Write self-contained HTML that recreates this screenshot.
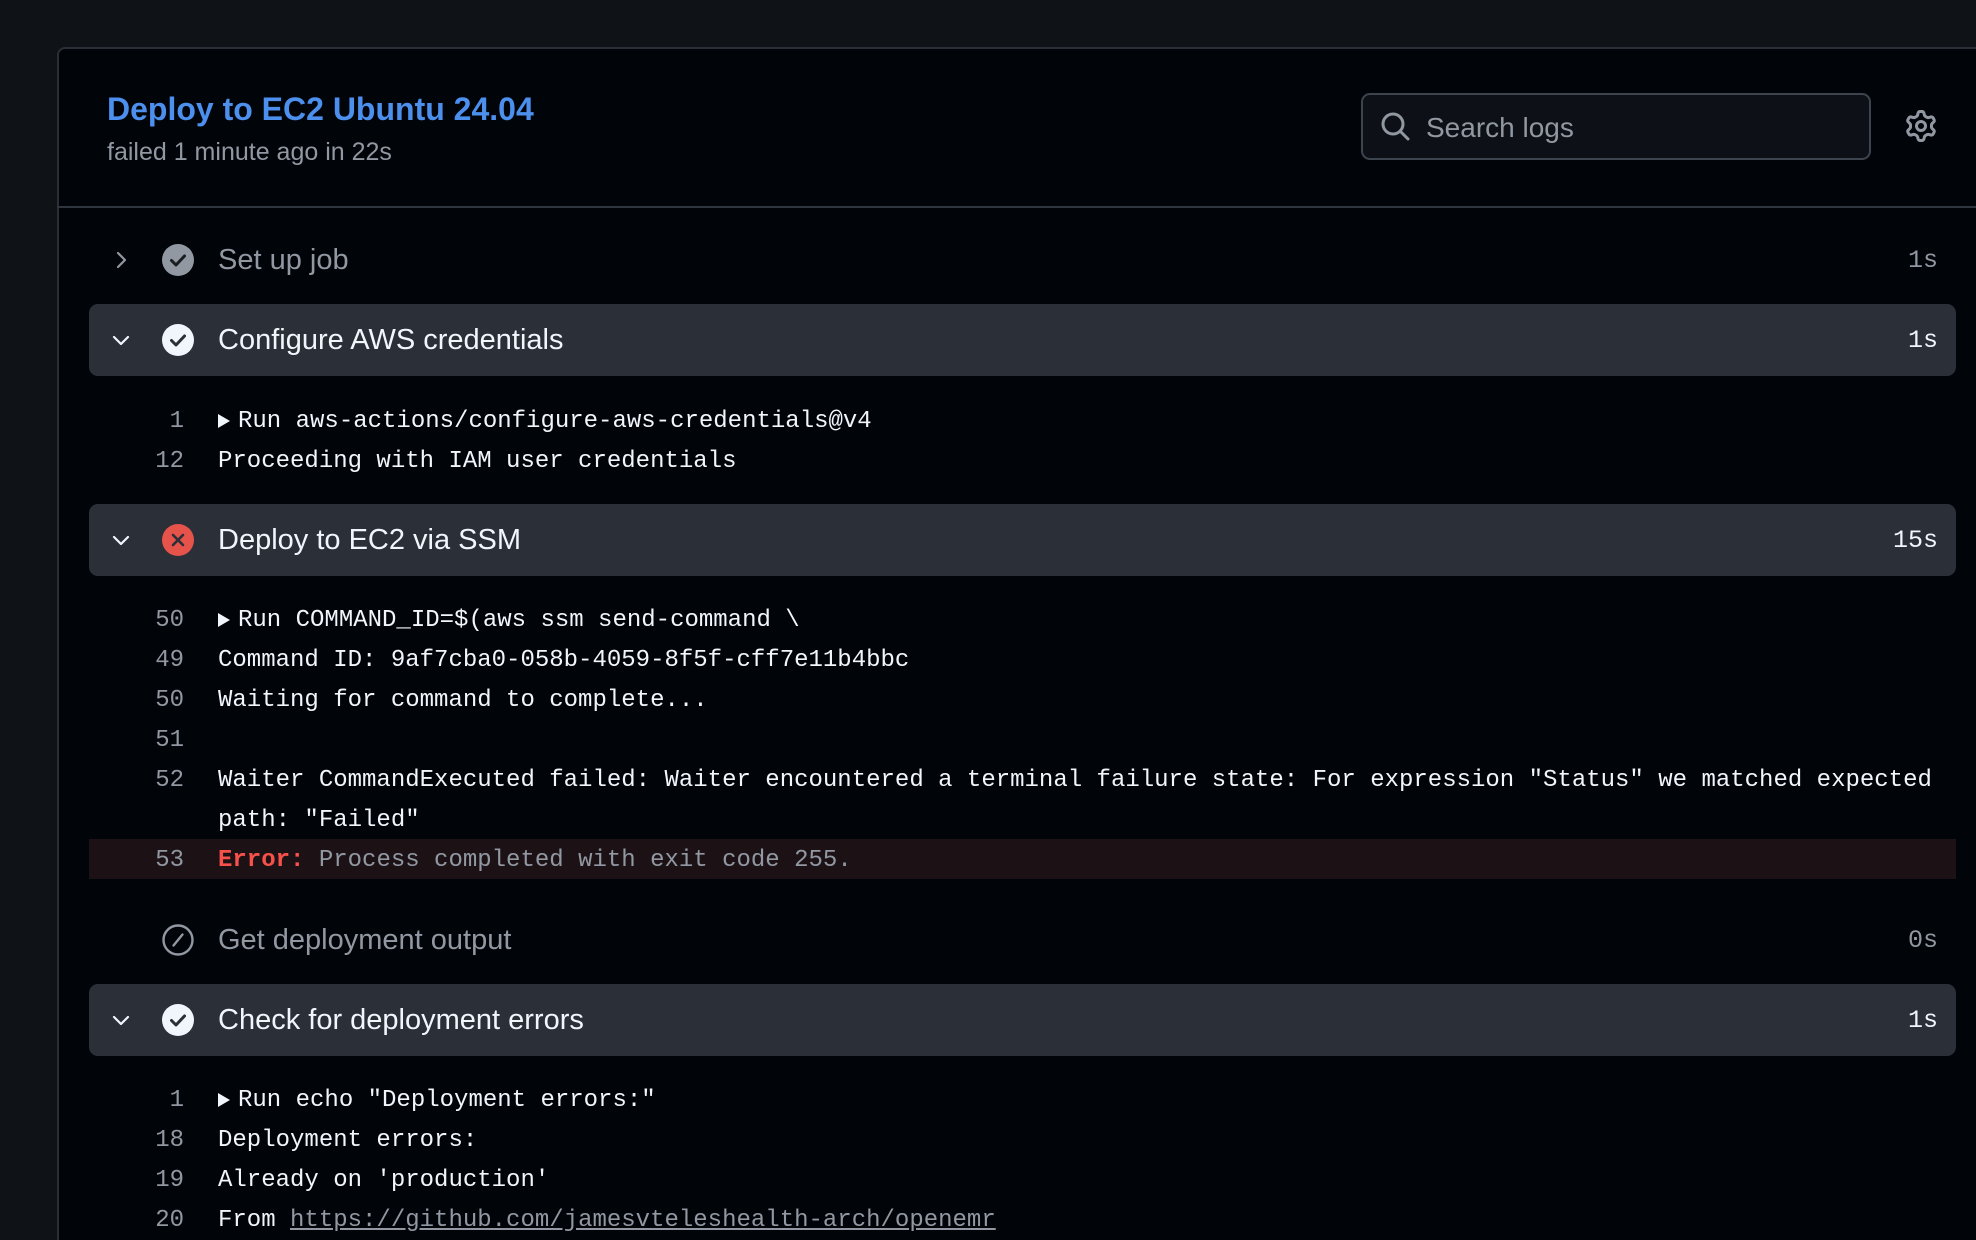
<!DOCTYPE html>
<html style="height:1240px;overflow:hidden"><head><meta charset="utf-8"><style>
*{margin:0;padding:0;box-sizing:border-box}
body{width:1976px;height:1240px;background:#0f1217;overflow:hidden;position:relative;font-family:"Liberation Sans",sans-serif}
.panel{position:absolute;left:57px;top:47px;width:1940px;height:1240px;background:#010409;border:2px solid #2a2f37;border-radius:8px}
.abs{position:absolute}
.title{left:107px;top:91px;font-size:32px;font-weight:bold;color:#4c8fed}
.sub{left:107px;top:138px;font-size:25px;color:#9198a1}
.div{left:57px;top:206px;width:1919px;height:2px;background:#2f353d}
.search{left:1361px;top:93px;width:510px;height:67px;border:2px solid #3d444d;border-radius:9px;background:#0d1117}
.search span{position:absolute;left:63px;top:17px;font-size:28px;color:#9198a1}
.row{left:89px;width:1867px;height:72px;border-radius:9px}
.row.hl{background:#2a2f38}
.stxt{position:absolute;left:129px;font-size:29px;line-height:72px;top:0}
.dur{position:absolute;right:18px;top:1px;line-height:72px;font-family:"Liberation Mono",monospace;font-size:25px}
.ic{position:absolute;left:73px;top:20px}
.chev{position:absolute;left:22px;top:26px}
.ln{position:absolute;left:89px;width:1867px;height:40px;font-family:"Liberation Mono",monospace;font-size:24px;line-height:40px;color:#f0f6fc;white-space:pre}
.ln .n{position:absolute;right:1772px;top:2px;color:#9198a1;text-align:right}
.ln .t{position:absolute;left:129px;top:2px}
.tri{display:inline-block;width:0;height:0;border-left:12px solid #f0f6fc;border-top:7px solid transparent;border-bottom:7px solid transparent;margin-right:8px;vertical-align:-1px}
</style></head><body>
<div class="panel"></div>
<div class="abs title">Deploy to EC2 Ubuntu 24.04</div>
<div class="abs sub">failed 1 minute ago in 22s</div>
<div class="abs div"></div>
<div class="abs search">
<svg class="abs" style="left:17px;top:16px" width="32" height="32" viewBox="0 0 32 32"><circle cx="13" cy="13" r="10" fill="none" stroke="#9198a1" stroke-width="3"/><path d="M20.5 20.5L28 28" stroke="#9198a1" stroke-width="3" stroke-linecap="round"/></svg>
<span>Search logs</span></div>
<svg class="abs" style="left:1905px;top:110px" width="32" height="32" viewBox="0 0 16 16"><path fill="#9198a1" d="M8 0a8.2 8.2 0 0 1 .701.031C9.444.095 9.99.645 10.16 1.29l.288 1.107c.018.066.079.158.212.224.231.114.454.243.668.386.123.082.233.09.299.071l1.103-.303c.644-.176 1.392.021 1.82.63.27.385.506.792.704 1.218.315.675.111 1.422-.364 1.891l-.814.806c-.049.048-.098.147-.088.294.016.257.016.515 0 .772-.01.147.038.246.088.294l.814.806c.475.469.679 1.216.364 1.891a7.977 7.977 0 0 1-.704 1.217c-.428.61-1.176.807-1.82.63l-1.102-.302c-.067-.019-.177-.011-.3.071a5.909 5.909 0 0 1-.668.386c-.133.066-.194.158-.211.224l-.29 1.106c-.168.646-.715 1.196-1.458 1.26a8.006 8.006 0 0 1-1.402 0c-.743-.064-1.289-.614-1.458-1.260l-.289-1.106c-.018-.066-.079-.158-.212-.224a5.738 5.738 0 0 1-.668-.386c-.123-.082-.233-.09-.299-.071l-1.103.303c-.644.176-1.392-.021-1.820-.63a8.12 8.12 0 0 1-.704-1.218c-.315-.675-.111-1.422.363-1.891l.815-.806c.05-.048.098-.147.088-.294a6.214 6.214 0 0 1 0-.772c.01-.147-.038-.246-.088-.294l-.815-.806C.635 6.045.431 5.298.746 4.623a7.92 7.92 0 0 1 .704-1.217c.428-.61 1.176-.807 1.82-.63l1.102.302c.067.019.177.011.3-.071.214-.143.437-.272.668-.386.133-.066.194-.158.211-.224l.29-1.106C6.009.645 6.556.095 7.299.03 7.53.01 7.764 0 8 0Zm-.571 1.525c-.036.003-.108.036-.137.146l-.289 1.105c-.147.561-.549.967-.998 1.189-.173.086-.34.183-.5.29-.417.278-.97.423-1.529.27l-1.103-.303c-.109-.03-.175.016-.195.045-.22.312-.412.644-.573.99-.014.031-.021.11.059.19l.815.806c.411.406.562.957.53 1.456a4.709 4.709 0 0 0 0 .582c.032.499-.119 1.05-.53 1.456l-.815.806c-.081.08-.073.159-.059.19.162.346.353.677.573.989.02.03.085.076.195.046l1.102-.303c.56-.153 1.113-.008 1.53.27.161.107.328.204.501.29.447.222.85.629.997 1.189l.289 1.105c.029.109.101.143.137.146a6.6 6.6 0 0 0 1.142 0c.036-.003.108-.036.137-.146l.289-1.105c.147-.561.549-.967.998-1.189.173-.086.34-.183.5-.29.417-.278.97-.423 1.529-.27l1.103.303c.109.029.175-.016.195-.045.22-.313.411-.644.573-.99.014-.031.021-.11-.059-.19l-.815-.806c-.411-.406-.562-.957-.53-1.456a4.709 4.709 0 0 0 0-.582c-.032-.499.119-1.05.53-1.456l.815-.806c.081-.08.073-.159.059-.19a6.464 6.464 0 0 0-.573-.989c-.02-.03-.085-.076-.195-.046l-1.102.303c-.56.153-1.113.008-1.53-.27a4.44 4.44 0 0 0-.501-.29c-.447-.222-.85-.629-.997-1.189l-.289-1.105c-.029-.11-.101-.143-.137-.146a6.6 6.6 0 0 0-1.142 0ZM11 8a3 3 0 1 1-6 0 3 3 0 0 1 6 0ZM9.5 8a1.5 1.5 0 1 0-3.001.001A1.5 1.5 0 0 0 9.5 8Z"/></svg>

<div class="abs row" style="top:224px">
<svg class="chev" width="20" height="20" viewBox="0 0 20 20"><path d="M7 3l7 7-7 7" fill="none" stroke="#9198a1" stroke-width="2.2" stroke-linecap="round" stroke-linejoin="round"/></svg>
<svg class="ic" width="32" height="32" viewBox="0 0 32 32"><circle cx="16" cy="16" r="16" fill="#9198a1"/><path d="M9.5 16.5l4.5 4.5 8.5-9" fill="none" stroke="#1a1d22" stroke-width="3" stroke-linecap="round" stroke-linejoin="round"/></svg>
<div class="stxt" style="color:#9198a1">Set up job</div><div class="dur" style="color:#9198a1">1s</div></div>

<div class="abs row hl" style="top:304px">
<svg class="chev" width="20" height="20" viewBox="0 0 20 20"><path d="M3 7l7 7 7-7" fill="none" stroke="#f0f6fc" stroke-width="2.2" stroke-linecap="round" stroke-linejoin="round"/></svg>
<svg class="ic" width="32" height="32" viewBox="0 0 32 32"><circle cx="16" cy="16" r="16" fill="#f0f6fc"/><path d="M9.5 16.5l4.5 4.5 8.5-9" fill="none" stroke="#2a2f38" stroke-width="3" stroke-linecap="round" stroke-linejoin="round"/></svg>
<div class="stxt" style="color:#f0f6fc">Configure AWS credentials</div><div class="dur" style="color:#f0f6fc">1s</div></div>
<div class="ln" style="top:400px"><span class="n">1</span><span class="t"><span class="tri"></span>Run aws-actions/configure-aws-credentials@v4</span></div>
<div class="ln" style="top:440px"><span class="n">12</span><span class="t">Proceeding with IAM user credentials</span></div>

<div class="abs row hl" style="top:504px">
<svg class="chev" width="20" height="20" viewBox="0 0 20 20"><path d="M3 7l7 7 7-7" fill="none" stroke="#f0f6fc" stroke-width="2.2" stroke-linecap="round" stroke-linejoin="round"/></svg>
<svg class="ic" width="32" height="32" viewBox="0 0 32 32"><circle cx="16" cy="16" r="16" fill="#e5534b"/><path d="M11 11l10 10M21 11l-10 10" stroke="#2a2f38" stroke-width="2.6" stroke-linecap="round"/></svg>
<div class="stxt" style="color:#f0f6fc">Deploy to EC2 via SSM</div><div class="dur" style="color:#f0f6fc">15s</div></div>
<div class="ln" style="top:599px"><span class="n">50</span><span class="t"><span class="tri"></span>Run COMMAND_ID=$(aws ssm send-command \</span></div>
<div class="ln" style="top:639px"><span class="n">49</span><span class="t">Command ID: 9af7cba0-058b-4059-8f5f-cff7e11b4bbc</span></div>
<div class="ln" style="top:679px"><span class="n">50</span><span class="t">Waiting for command to complete...</span></div>
<div class="ln" style="top:719px"><span class="n">51</span><span class="t"></span></div>
<div class="ln" style="top:759px"><span class="n">52</span><span class="t">Waiter CommandExecuted failed: Waiter encountered a terminal failure state: For expression "Status" we matched expected</span></div>
<div class="ln" style="top:799px"><span class="t">path: "Failed"</span></div>
<div class="ln" style="top:839px;background:#1c1216"><span class="n">53</span><span class="t"><b style="color:#f85149">Error:</b> <span style="color:#9198a1">Process completed with exit code 255.</span></span></div>

<div class="abs row" style="top:904px">
<svg class="ic" width="32" height="32" viewBox="0 0 32 32"><circle cx="16" cy="16" r="14.5" fill="none" stroke="#9198a1" stroke-width="2.4"/><path d="M20.5 10.5l-9 11" stroke="#9198a1" stroke-width="2.4" stroke-linecap="round"/></svg>
<div class="stxt" style="color:#9198a1">Get deployment output</div><div class="dur" style="color:#9198a1">0s</div></div>

<div class="abs row hl" style="top:984px">
<svg class="chev" width="20" height="20" viewBox="0 0 20 20"><path d="M3 7l7 7 7-7" fill="none" stroke="#f0f6fc" stroke-width="2.2" stroke-linecap="round" stroke-linejoin="round"/></svg>
<svg class="ic" width="32" height="32" viewBox="0 0 32 32"><circle cx="16" cy="16" r="16" fill="#f0f6fc"/><path d="M9.5 16.5l4.5 4.5 8.5-9" fill="none" stroke="#2a2f38" stroke-width="3" stroke-linecap="round" stroke-linejoin="round"/></svg>
<div class="stxt" style="color:#f0f6fc">Check for deployment errors</div><div class="dur" style="color:#f0f6fc">1s</div></div>
<div class="ln" style="top:1079px"><span class="n">1</span><span class="t"><span class="tri"></span>Run echo "Deployment errors:"</span></div>
<div class="ln" style="top:1119px"><span class="n">18</span><span class="t">Deployment errors:</span></div>
<div class="ln" style="top:1159px"><span class="n">19</span><span class="t">Already on 'production'</span></div>
<div class="ln" style="top:1199px"><span class="n">20</span><span class="t">From <span style="color:#9198a1;text-decoration:underline">https://github.com/jamesvteleshealth-arch/openemr</span></span></div>
</body></html>
